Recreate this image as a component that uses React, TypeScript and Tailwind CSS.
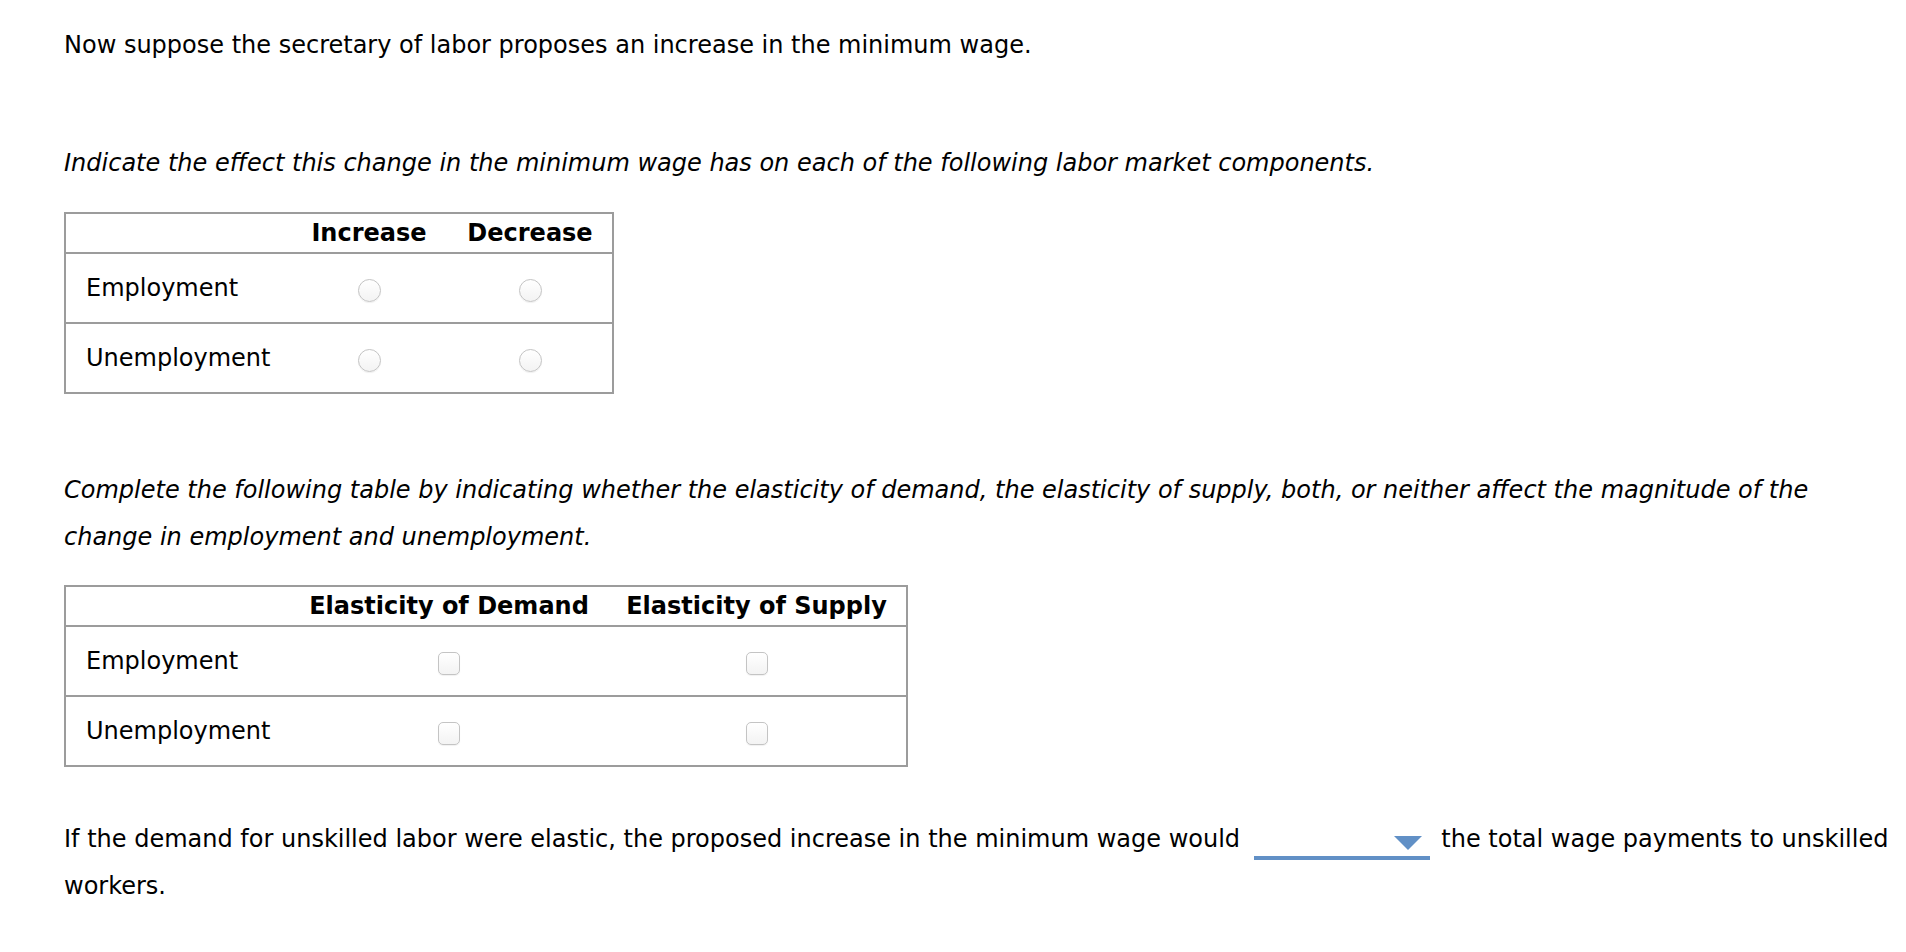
import { useState } from 'react'

const FONT = { fontFamily: '"DejaVu Sans", Verdana, sans-serif' }

function Radio({ checked, onClick }: { checked: boolean; onClick: () => void }) {
  return (
    <button
      type="button"
      onClick={onClick}
      className="inline-flex items-center justify-center w-[23px] h-[23px] rounded-full border border-[#c4c4c4] bg-gradient-to-b from-white to-[#f3f3f3] shadow-[0_1px_1px_rgba(0,0,0,0.06)] align-middle"
    >
      {checked && <span className="w-[11px] h-[11px] rounded-full bg-[#3b73b9]" />}
    </button>
  )
}

function Checkbox({ checked, onClick }: { checked: boolean; onClick: () => void }) {
  return (
    <button
      type="button"
      onClick={onClick}
      className="inline-flex items-center justify-center w-[22px] h-[23px] rounded-[5px] border border-[#c4c4c4] bg-gradient-to-b from-white to-[#f3f3f3] shadow-[0_1px_1px_rgba(0,0,0,0.06)] align-middle text-[#3b73b9] text-[16px] leading-none"
    >
      {checked ? '✓' : ''}
    </button>
  )
}

const ROWS = ['Employment', 'Unemployment']

function EffectTable() {
  const [picked, setPicked] = useState<Record<string, string>>({})
  return (
    <table className="table-fixed border-collapse border-2 border-[#9c9c9c] w-[548px]">
      <thead>
        <tr className="h-[40px]">
          <th className="w-[225px]" />
          <th className="w-[158px] text-center font-bold text-[24px] leading-none">Increase</th>
          <th className="w-[165px] text-center font-bold text-[24px] leading-none">Decrease</th>
        </tr>
      </thead>
      <tbody>
        {ROWS.map((r) => (
          <tr key={r} className="h-[70px] border-t-2 border-[#9c9c9c]">
            <td className="pl-[20px] text-[24px] leading-none">{r}</td>
            {['inc', 'dec'].map((c) => (
              <td key={c} className="text-center pt-[3px]">
                <Radio checked={picked[r] === c} onClick={() => setPicked({ ...picked, [r]: c })} />
              </td>
            ))}
          </tr>
        ))}
      </tbody>
    </table>
  )
}

function ElasticityTable() {
  const [checked, setChecked] = useState<Record<string, boolean>>({})
  return (
    <table className="table-fixed border-collapse border-2 border-[#9c9c9c] w-[842px]">
      <thead>
        <tr className="h-[40px]">
          <th className="w-[226px]" />
          <th className="w-[316px] text-center font-bold text-[24px] leading-none">Elasticity of Demand</th>
          <th className="w-[300px] text-center font-bold text-[24px] leading-none">Elasticity of Supply</th>
        </tr>
      </thead>
      <tbody>
        {ROWS.map((r) => (
          <tr key={r} className="h-[70px] border-t-2 border-[#9c9c9c]">
            <td className="pl-[20px] text-[24px] leading-none">{r}</td>
            {['d', 's'].map((c) => (
              <td key={c} className="text-center pt-[3px]">
                <Checkbox
                  checked={!!checked[r + c]}
                  onClick={() => setChecked({ ...checked, [r + c]: !checked[r + c] })}
                />
              </td>
            ))}
          </tr>
        ))}
      </tbody>
    </table>
  )
}

export default function App() {
  return (
    <div className="min-h-[952px] bg-white text-black pl-[64px] pr-[8px] pt-[22px] text-[24px] leading-[47px]" style={FONT}>
      <p>Now suppose the secretary of labor proposes an increase in the minimum wage.</p>

      <p className="italic mt-[71px]">
        Indicate the effect this change in the minimum wage has on each of the following labor market components.
      </p>

      <div className="mt-[25px]">
        <EffectTable />
      </div>

      <p className="italic mt-[73px]">
        Complete the following table by indicating whether the elasticity of demand, the elasticity of supply, both, or
        neither affect the magnitude of the change in employment and unemployment.
      </p>

      <div className="mt-[24px]">
        <ElasticityTable />
      </div>

      <p className="mt-[49px]">
        If the demand for unskilled labor were elastic, the proposed increase in the minimum wage would{' '}
        <span className="inline-flex items-start justify-end w-[176px] h-[30px] border-b-4 border-[#6190c6] align-[-3px] ml-[6px] mr-[4px] pr-[8px]">
          <svg width="28" height="14" viewBox="0 0 28 14" className="mt-[6px]">
            <polygon points="0,0 28,0 14,14" fill="#6190c6" />
          </svg>
        </span>{' '}
        the total wage payments to unskilled workers.
      </p>
    </div>
  )
}
